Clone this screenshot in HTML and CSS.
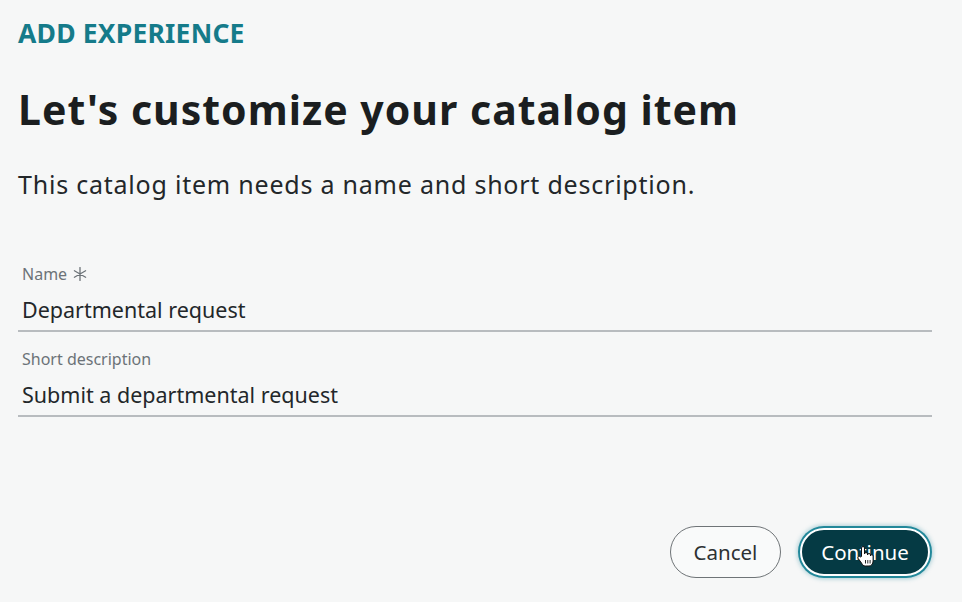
FILE: index.html
```html
<!DOCTYPE html>
<html>
<head>
<meta charset="utf-8">
<link rel="stylesheet" href="styles.css">
</head>
<body>
<div class="page">
  <div class="eyebrow">ADD EXPERIENCE</div>
  <h1 class="title">Let's customize your catalog item</h1>
  <p class="lead">This catalog item needs a name and short description.</p>
  <div class="fields">
    <div class="field">
      <div class="label">Name
        <svg class="req" width="14" height="14" viewBox="0 0 14 14" aria-label="required">
          <path d="M7,0.5 V13.5 M1.4,3.75 L12.6,10.25 M1.4,10.25 L12.6,3.75" stroke="#6c7378" stroke-width="1.3" stroke-linecap="round"/>
        </svg>
      </div>
      <div class="value">Departmental request</div>
    </div>
    <div class="field">
      <div class="label">Short description</div>
      <div class="value">Submit a departmental request</div>
    </div>
  </div>
  <div class="actions">
    <button class="btn btn-secondary">Cancel</button>
    <button class="btn btn-primary">Continue
      <svg class="cursor" width="18" height="22" viewBox="0 0 18 22" aria-hidden="true">
        <path d="M5.5,11.5 V3 a1.5,1.5 0 0 1 3,0 V9 a1.5,1.5 0 0 1 3,0 V10 a1.5,1.5 0 0 1 3,0 V11 a1.3,1.3 0 0 1 2.6,0 V16 c0,3 -2,5 -4,5 H9.5 c-2,0 -3,-1 -4,-3 L2.2,13.5 a1.4,1.4 0 0 1 2.4,-1.5 Z" fill="#fff" stroke="#111" stroke-width="1" stroke-linejoin="round"/>
        <path d="M9.5,15 V18.5 M11.8,15 V18.5 M14.1,15 V18.5" stroke="#111" stroke-width="0.9"/>
      </svg>
    </button>
  </div>
</div>
</body>
</html>
```
FILE: styles.css
```css
html, body {
  margin: 0;
  padding: 0;
  background: #f6f7f7;
}
body {
  font-family: "Noto Sans", "Open Sans", sans-serif;
  color: #1c1f21;
  width: 962px;
  height: 602px;
  overflow: hidden;
}
.page {
  padding: 15px 30px 0 18px;
  display: flex;
  flex-direction: column;
}
.eyebrow {
  font-size: 26.5px;
  font-weight: 700;
  color: #157b8a;
  line-height: 36px;
  letter-spacing: 0.2px;
}
.title {
  margin: 30px 0 0;
  font-size: 41px;
  font-weight: 700;
  line-height: 56px;
  letter-spacing: 1px;
  color: #1b1e20;
}
.lead {
  margin: 29.5px 0 0;
  font-size: 25px;
  line-height: 34px;
  letter-spacing: 0.78px;
  color: #23272a;
}
.fields {
  display: flex;
  flex-direction: column;
  gap: 16px;
  margin-top: 62px;
}
.field {
  display: flex;
  flex-direction: column;
  gap: 11px;
  padding: 0 4px 6px;
  border-bottom: 2px solid #b8bcbf;
}
.label {
  display: flex;
  align-items: center;
  gap: 6px;
  font-size: 16px;
  line-height: 22px;
  color: #6c7378;
}
.req {
  display: block;
}
.value {
  font-size: 21.5px;
  line-height: 28px;
  color: #23272a;
}
.actions {
  display: flex;
  justify-content: flex-end;
  align-items: center;
  gap: 19px;
  margin-top: 109.5px;
  padding-right: 2px;
}
.btn {
  font-family: "Noto Sans", "Open Sans", sans-serif;
  font-size: 20.5px;
  border-radius: 26px;
  padding: 0;
  cursor: pointer;
}
.btn-secondary {
  width: 111px;
  height: 52px;
  background: #f9fafa;
  border: 1.5px solid #6f7477;
  color: #2d3133;
}
.btn-primary {
  position: relative;
  width: 130px;
  height: 48px;
  background: #053a44;
  color: #ffffff;
  border: 2px solid #ffffff;
  box-shadow: 0 0 0 2px #22889a, 0 0 4px 3px rgba(34,136,154,0.35);
}
.cursor {
  position: absolute;
  left: 54px;
  top: 15px;
}
```
